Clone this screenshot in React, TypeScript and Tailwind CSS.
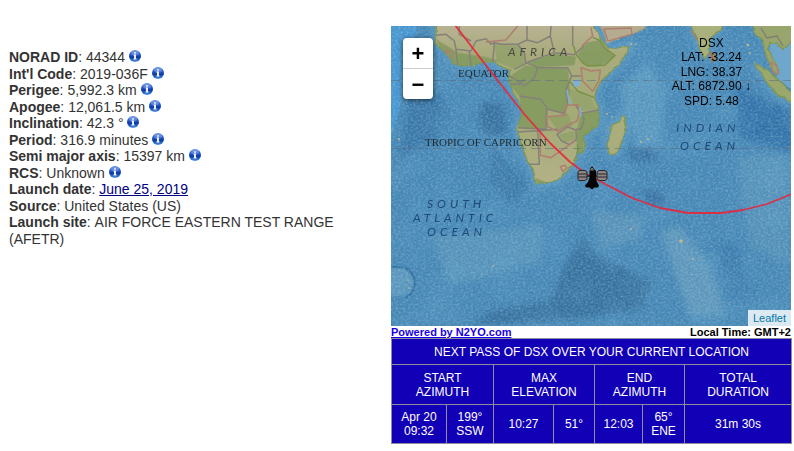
import React from "react";

type Fact = {
  label: string;
  value: string;
  info?: boolean;
  href?: string;
};

const facts: Fact[] = [
  { label: "NORAD ID", value: "44344", info: true },
  { label: "Int'l Code", value: "2019-036F", info: true },
  { label: "Perigee", value: "5,992.3 km", info: true },
  { label: "Apogee", value: "12,061.5 km", info: true },
  { label: "Inclination", value: "42.3 °", info: true },
  { label: "Period", value: "316.9 minutes", info: true },
  { label: "Semi major axis", value: "15397 km", info: true },
  { label: "RCS", value: "Unknown", info: true },
  { label: "Launch date", value: "June 25, 2019", href: "#launch" },
  { label: "Source", value: "United States (US)" },
  { label: "Launch site", value: "AIR FORCE EASTERN TEST RANGE (AFETR)" },
];

function InfoIcon() {
  return (
    <svg className="inline-block size-3 align-baseline" viewBox="0 0 12 12" aria-hidden="true">
      <defs>
        <linearGradient id="ball" x1="0" y1="0" x2="0" y2="1">
          <stop offset="0" stopColor="#5b8ce6" />
          <stop offset="0.45" stopColor="#1d4fc4" />
          <stop offset="0.6" stopColor="#0a35a0" />
          <stop offset="1" stopColor="#4f97ee" />
        </linearGradient>
      </defs>
      <circle cx="6" cy="6" r="6" fill="url(#ball)" />
      <ellipse cx="6" cy="3.2" rx="4" ry="2.4" fill="#fff" opacity="0.22" />
      <rect x="5.1" y="2.3" width="1.8" height="1.4" fill="#fff" />
      <path d="M4.6 4.6H6.9V8.5H7.5V9.4H4.5V8.5H5.100V5.500H4.6Z" fill="#fff" />
    </svg>
  );
}

function Facts() {
  return (
    <dl className="text-[14px] leading-[1.18] text-[#333]">
      {facts.map((f) => (
        <div key={f.label}>
          <dt className="inline font-bold">{f.label}</dt>:{" "}
          <dd className="inline">
            {f.href ? (
              <a href={f.href} className="text-[#000080] underline">
                {f.value}
              </a>
            ) : (
              f.value
            )}
            {f.info && (
              <>
                {" "}
                <InfoIcon />
              </>
            )}
          </dd>
        </div>
      ))}
    </dl>
  );
}

const AFRICA =
  "M46 -4L44 17L54 26L64 38L72 40L84 39L94 36L104 36L111 41L119 44L118 54L122 67L129 77L131 87L128 97L126 103L131 120L136 134L142 144L145 157L152 157L161 156L168 153L176 145L184 136L186 127L192 127L194 118L192 110L199 105L207 99L208 90L207 80L204 74L204 66L211 54L220 46L229 37L236 26L238 20L226 22L217 22L212 16L207 7L200 -4Z";

const MADAGASCAR =
  "M219 108L216 118L218 127L222 129L227 126L231 114L235 99L233 89L228 96L221 99Z";

function WorldMap() {
  return (
    <svg
      className="block h-full w-full"
      viewBox="0 0 400 300"
      preserveAspectRatio="xMidYMid slice"
      role="img"
      aria-label="Ground track of DSX"
    >
      <defs>
        <filter id="grain" x="0" y="0" width="100%" height="100%">
          <feTurbulence type="fractalNoise" baseFrequency="0.4 0.5" numOctaves="3" seed="4" />
          <feColorMatrix values="0 0 0 0 0.55  0 0 0 0 0.7  0 0 0 0 0.8  1.4 0 0 0 -0.5" />
        </filter>
        <filter id="shade" x="0" y="0" width="100%" height="100%">
          <feTurbulence type="fractalNoise" baseFrequency="0.03" numOctaves="4" seed="11" />
          <feColorMatrix values="0 0 0 0 0.13  0 0 0 0 0.38  0 0 0 0 0.6  2.4 0 0 0 -1" />
        </filter>
        <filter id="rough" x="-10%" y="-10%" width="120%" height="120%">
          <feTurbulence type="fractalNoise" baseFrequency="0.2" numOctaves="2" seed="3" result="n" />
          <feDisplacementMap
            in="SourceGraphic"
            in2="n"
            scale="3"
            xChannelSelector="R"
            yChannelSelector="G"
          />
        </filter>
        <filter id="soft" x="-20%" y="-20%" width="140%" height="140%">
          <feGaussianBlur stdDeviation="3" />
        </filter>
        <linearGradient id="land" x1="0" y1="0" x2="0" y2="1">
          <stop offset="0" stopColor="#b9b394" />
          <stop offset="0.2" stopColor="#a9ab7c" />
          <stop offset="0.6" stopColor="#a3ab76" />
          <stop offset="1" stopColor="#b3b187" />
        </linearGradient>
        <clipPath id="africa">
          <path d={AFRICA} />
        </clipPath>
      </defs>

      {/* ocean floor */}
      <rect width="400" height="300" fill="#4486b5" />
      <g filter="url(#soft)">
        <path d="M92 75L112 78L116 105L106 112L92 108L88 92Z" fill="#34709f" />
        <path d="M20 60L50 70L60 90L40 120L8 130Z" fill="#3877a8" />
        <path d="M100 120L140 160L120 178L100 160Z" fill="#3b7aaa" />
        <path d="M168 252L190 210L202 225L235 243L262 258L250 284L190 292L80 300L100 285L160 275Z" fill="#34719f" />
        <path d="M200 185L250 190L250 212L212 222Z" fill="#5590b7" />
        <path d="M40 210L150 200L150 235L60 260Z" fill="#5391b9" />
        <path d="M228 60L255 40L275 62L270 118L245 122Z" fill="#5595be" />
        <path d="M345 60L400 85V125L348 112Z" fill="#2f6fa7" />
        <path d="M236 125L262 120L268 132L240 138Z" fill="#346fa2" />
        <path d="M250 165L270 165L276 180L262 182Z" fill="#346fa2" />
        <path d="M325 218L345 215L355 245L370 280L340 276Z" fill="#3b7cae" />
        <path d="M270 205L290 202L320 240L335 290L300 290L285 250Z" fill="#5c96bb" />
        <path d="M345 130H400V240L360 220Z" fill="#518fb8" />
      </g>
      <rect width="400" height="300" filter="url(#shade)" opacity="0.25" />
      <path d="M0 0H26L20 30L8 85L0 112Z" fill="#4595d0" />
      <path d="M0 243H12Q22 248 22 258Q21 266 14 269L0 271Z" fill="#5d99be" opacity="0.8" />
      <path d="M0 241H12Q24 245 24 258Q23 268 14 272" fill="none" stroke="#2c6999" strokeWidth="1.6" opacity="0.8" />
      <rect width="400" height="300" filter="url(#grain)" opacity="0.45" />

      {/* shallow water along the coasts */}
      <g fill="none" stroke="#6fa9cb" strokeWidth="9" opacity="0.45" filter="url(#soft)">
        <path d={AFRICA} />
        <path d="M300 0L311 26L317 29L319 7L329 0M363 37L387 69L400 76" />
        <path d={MADAGASCAR} />
      </g>
      <path d="M380 12L392 18L404 8V66L386 52L378 28Z" fill="#6fa6cc" />

      {/* land */}
      <g filter="url(#rough)" stroke="#84974f" strokeWidth="1.2" strokeLinejoin="round">
        <path d={AFRICA} fill="url(#land)" />
        <path d="M206 -4L213 6L216 17L228 12L241 8L254 2L256 -4Z" fill="#b5ac90" stroke="#a5a07c" />
        <path d={MADAGASCAR} fill="#a9ae7c" />
        <path d="M299 -4L306 12L309 24L314 32L318 27L319 12L330 4L333 -4Z" fill="#a9b07b" />
        <path d="M320 26L323 27L325 34L321 36Z" fill="#a18a5f" stroke="#96734f" />
        <path
          d="M361 -4L364 8L372 14L374 26L379 40L386 49L388 44L382 33L377 22L379 17L386 18L393 24L397 18L404 12V-4Z"
          fill="#98a56d"
        />
        <path d="M363 37L370 47L377 58L387 69L404 78V70L394 60L383 50L373 42Z" fill="#9ba86c" />
      </g>

      {/* terrain and country borders */}
      <g clipPath="url(#africa)">
        <g transform="scale(0.33333)">
          <g fill="#7d975a" opacity="0.75">
            <path d="M135 40L170 60L200 80L280 92L330 105L210 125L160 95Z" />
            <path d="M310 52L380 58L405 82L400 115L370 128L318 108Z" opacity="0.6" />
            <path d="M405 108L490 84L555 92L550 118L440 124Z" />
            <path d="M358 150L405 118L440 125H530L538 200L520 260L470 250L450 220L385 210L350 170Z" />
            <path d="M385 210L450 220L470 255L465 310L380 305L390 250Z" />
            <path d="M560 85L585 50L625 42L650 70L668 92L630 118L580 118Z" />
            <path d="M568 265L622 250L624 300L580 335L578 382L558 400L556 330Z" />
            <path d="M470 272L530 262L545 300L500 312Z" opacity="0.6" />
            <path d="M535 190L560 195L600 215L615 250L570 255L545 235Z" opacity="0.45" />
            <path d="M505 325L550 315L550 340L520 350Z" opacity="0.6" />
            <path d="M430 455L470 470L530 458L555 400L548 430L520 475L440 480Z" />
          </g>
          <g fill="none" strokeWidth="4.5" strokeLinejoin="round">
            <path
              stroke="#85807a"
              d="M135 28L165 25L190 45L195 70L240 75L255 45L285 38M205 0V25L240 45M195 70L200 115M235 75L240 120M285 38L300 55L310 50L330 55L380 55L408 42V0M310 52L305 108M380 55L400 80L405 112L370 130M408 42L440 50L478 30L480 0M478 30L490 80L410 108M490 80L550 86L578 60M545 60V0M405 110L440 125H530L542 150L525 190L530 235L518 262L470 250L450 220L385 210M358 150L400 180L430 155L440 125M358 175H385L400 160M467 250L465 310L380 305M378 318L440 314L500 310M498 325L530 303L555 312L556 340L535 356L512 345ZM440 314L445 415L415 415M565 255L580 280L570 310L555 310M540 150L570 150M555 240L570 262L622 252"
            />
            <path
              stroke="#b07d70"
              d="M285 48L345 42L380 0M467 272L522 268L525 238L560 236L565 260L558 285L528 298L500 316L470 302ZM570 125L600 135L628 132L624 162L605 196L575 165ZM448 320V388L480 395L556 342M165 72L185 80L180 100L168 92ZM572 60L605 30L600 5M508 422L522 418L528 426L515 436Z"
            />
            <path
              stroke="#7a9148"
              d="M548 60L555 85L575 110L590 120L640 118L672 88L640 66L628 44L605 34M535 165L560 195L610 215M560 355V385L548 405"
            />
          </g>
          <path d="M545 162L568 160L566 180L550 184Z" fill="#7fb0d3" />
          <path d="M528 192L532 215L540 235M566 245L570 272" fill="none" stroke="#7fb0d3" strokeWidth="5" />
        </g>
      </g>
      <g fill="none" stroke="#b07d70" strokeWidth="1.3">
        <path d="M213 3L240 2L241 8L217 15ZM380 36L386 40L387 48L382 46ZM300 4L306 14M318 28L322 34" />
        <path d="M370 2L376 12L386 10L392 20" stroke="#7f7d70" />
      </g>
      <g fill="#c4b98e">
        <circle cx="240" cy="18" r="1" />
        <circle cx="245" cy="18" r="0.8" />
        <circle cx="216" cy="88" r="0.9" />
        <circle cx="221" cy="91" r="0.8" />
        <circle cx="257" cy="113" r="1" />
        <circle cx="250" cy="116" r="1.1" />
        <circle cx="240" cy="203" r="0.9" />
        <circle cx="290" cy="215" r="1.8" />
        <circle cx="302" cy="233" r="1" />
        <circle cx="102" cy="240" r="0.9" />
        <circle cx="17" cy="254" r="0.8" />
        <circle cx="18" cy="262" r="0.8" />
        <circle cx="357" cy="19" r="1.2" />
        <circle cx="359" cy="27" r="1" />
        <circle cx="8" cy="113" r="0.9" />
      </g>

      {/* equator and tropic */}
      <g stroke="#5d6f7e" strokeWidth="0.8" strokeDasharray="9 5" opacity="0.7">
        <path d="M0 54.500H400M0 122.500H400" />
      </g>

      <g className="font-['Lato','Noto_Sans',sans-serif] text-[12px] tracking-[4px] italic" fill="#1d4a77">
        <text x="117" y="30" fill="#4a4a42">AFRICA</text>
        <text x="285" y="106">INDIAN</text>
        <text x="289" y="124">OCEAN</text>
        <text x="36" y="182">SOUTH</text>
        <text x="22" y="196">ATLANTIC</text>
        <text x="36" y="210">OCEAN</text>
      </g>
      <g className="font-['Liberation_Serif',serif] text-[11px]" fill="#1f2a30">
        <text x="67" y="51">EQUATOR</text>
        <text x="34" y="120">TROPIC OF CAPRICORN</text>
      </g>

      {/* orbit */}
      <path
        d="M64 -1L100 46L134 89L159 117L179 136L197 149L216 159L241 172L269 182L297 187H331L352 184L376 178L401 168"
        fill="none"
        stroke="#e8263a"
        strokeWidth="1.8"
        strokeLinejoin="round"
        opacity="0.9"
      />

      {/* satellite */}
      <g>
        <path d="M193 150H210" stroke="#333" strokeWidth="2" />
        <g fill="#8b8583" stroke="#2c2828" strokeWidth="1">
          <path d="M188 144.500H194L196 146V153L194 154.500H188L187 153V146Z" />
          <path d="M208 144.500H214L216 146V153L214 154.500H208L206 153V146Z" />
          <path d="M187 148H196M187 151H196M206 148H216M206 151H216" />
        </g>
        <path
          d="M201 140L203 143L205 145V152L206 156L208 159.500L207 161.500H203L202 163H200L199 161.500H195L194 159.500L197 156L198.500 152V145L199 143Z"
          fill="#050505"
        />
        <path d="M200 142H202L203 144.500H199Z" fill="#77716c" />
      </g>
    </svg>
  );
}

function TrackingMap() {
  return (
    <div className="relative h-[300px] overflow-hidden">
      <WorldMap />
      <div className="absolute top-3 left-3 flex w-[30px] flex-col overflow-hidden rounded-sm bg-white text-[22px] font-bold text-black shadow-[0_1px_5px_rgba(0,0,0,0.65)]">
        <button
          type="button"
          aria-label="Zoom in"
          className="flex h-[31px] items-center justify-center border-b border-[#ccc]"
        >
          +
        </button>
        <button type="button" aria-label="Zoom out" className="flex h-[30px] items-center justify-center">
          −
        </button>
      </div>
      <div className="absolute top-[10px] right-10 text-center text-[12px] leading-[1.2] text-black">
        <p>DSX</p>
        <p>LAT: -32.24</p>
        <p>LNG: 38.37</p>
        <p>ALT: 6872.90 ↓</p>
        <p>SPD: 5.48</p>
      </div>
      <div className="absolute right-0 bottom-0 bg-white/80 px-[5px] text-[11px] leading-4">
        <a href="#leaflet" className="text-[#0078a8]">
          Leaflet
        </a>
      </div>
    </div>
  );
}

function PassTable() {
  const cell = "border border-[#8f8d9c] p-0 font-normal";
  return (
    <table className="w-full table-fixed border-collapse bg-[#1200b6] text-center text-[12px] leading-[14px] text-white">
      <colgroup>
        <col className="w-[55px]" />
        <col className="w-[47px]" />
        <col className="w-[60px]" />
        <col className="w-[41px]" />
        <col className="w-[48px]" />
        <col className="w-[42px]" />
        <col className="w-[107px]" />
      </colgroup>
      <thead>
        <tr className="h-[26px]">
          <th colSpan={7} className={cell}>
            NEXT PASS OF DSX OVER YOUR CURRENT LOCATION
          </th>
        </tr>
        <tr className="h-10">
          <th colSpan={2} className={cell}>START<br />AZIMUTH</th>
          <th colSpan={2} className={cell}>MAX<br />ELEVATION</th>
          <th colSpan={2} className={cell}>END<br />AZIMUTH</th>
          <th className={cell}>TOTAL<br />DURATION</th>
        </tr>
      </thead>
      <tbody>
        <tr className="h-[39px]">
          <td className={cell}>Apr 20<br />09:32</td>
          <td className={cell}>199°<br />SSW</td>
          <td className={cell}>10:27</td>
          <td className={cell}>51°</td>
          <td className={cell}>12:03</td>
          <td className={cell}>65°<br />ENE</td>
          <td className={cell}>31m 30s</td>
        </tr>
      </tbody>
    </table>
  );
}

export default function App() {
  return (
    <main className="flex bg-white pt-[26px] pr-[3px] pl-[9px] font-['Liberation_Sans',Arial,sans-serif]">
      <section className="min-w-0 flex-1 pt-[23px]">
        <Facts />
      </section>
      <section className="w-[400px] shrink-0">
        <TrackingMap />
        <div className="flex justify-between text-[11px] leading-3 font-bold">
          <a href="#n2yo" className="text-[#1a00e8] underline">
            Powered by N2YO.com
          </a>
          <p className="text-black">Local Time: GMT+2</p>
        </div>
        <PassTable />
      </section>
    </main>
  );
}
